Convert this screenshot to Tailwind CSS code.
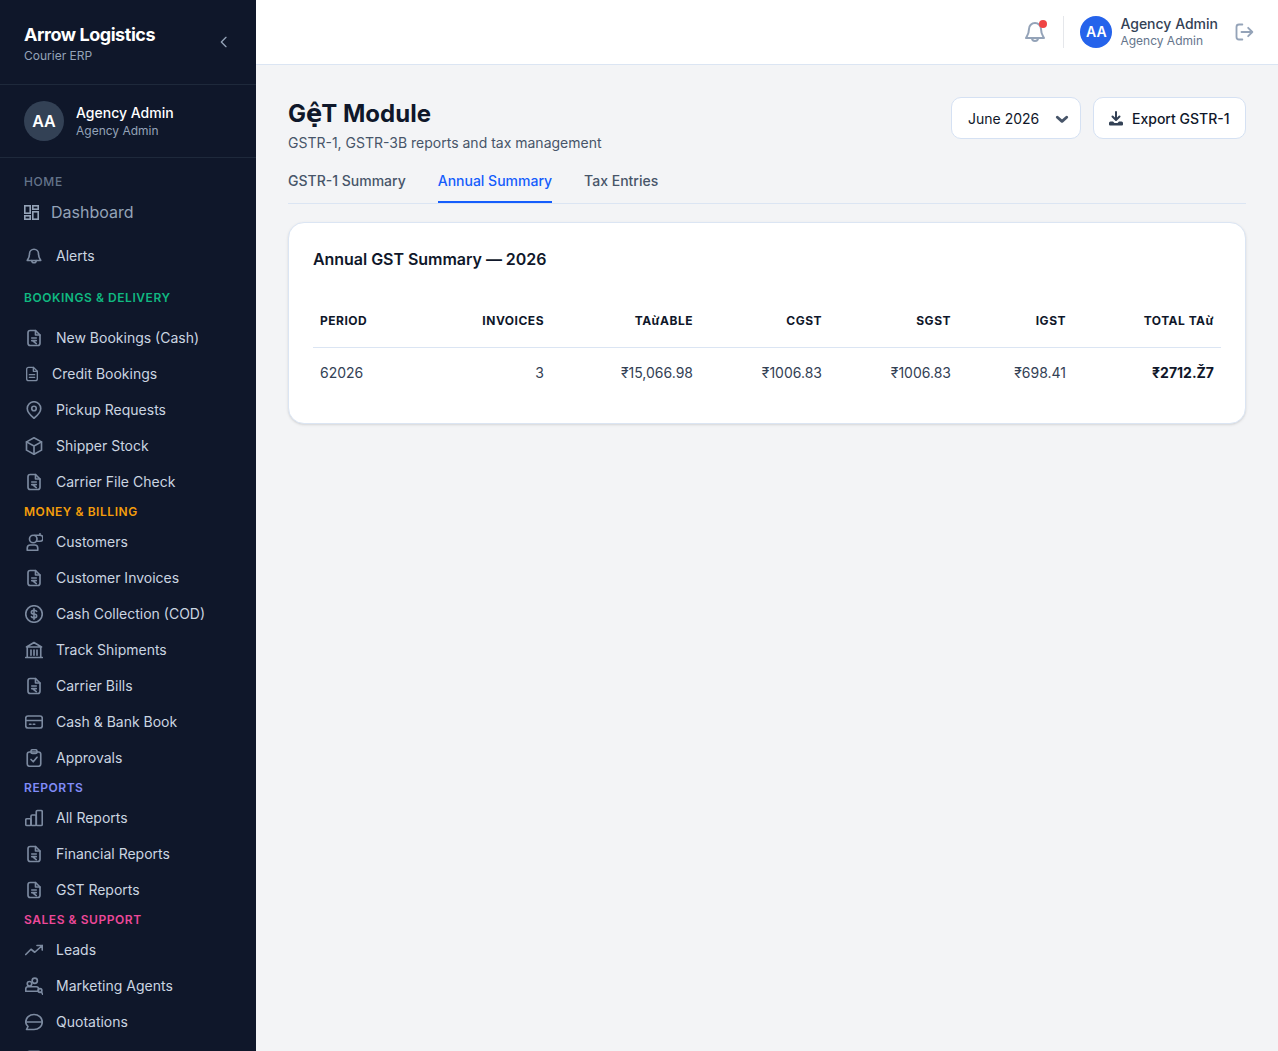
<!DOCTYPE html>
<html>
<head>
    <title>GST Module</title>
    <script src="https://cdn.jsdelivr.net/npm/@tailwindcss/browser@4"></script>
</head>
<body class="h-screen w-full overflow-hidden flex bg-[#f3f4f6] font-['Inter',sans-serif] text-[#0f172a] antialiased">
    <aside class="w-64 h-[1051px] shrink-0 overflow-hidden bg-[#0f172a] text-[#cbd5e1]">
        <div class="h-[85px] border-b border-[#1e293b] pl-6 pr-6 flex justify-between">
            <div class="pt-[21px]">
                <div class="text-lg leading-[28px] font-bold tracking-[-0.45px] text-white">Arrow Logistics</div>
                <div class="-mt-px text-xs leading-4 text-[#94a3b8]">Courier ERP</div>
            </div>
            <svg class="w-4 h-4 text-[#94a3b8] mt-[34px]" viewBox="0 0 24 24" fill="none" stroke="currentColor" stroke-width="2" stroke-linecap="round" stroke-linejoin="round"><path d="M15 5l-7 7 7 7"/></svg>
        </div>
        <div class="h-[73px] border-b border-[#1e293b] px-6 flex items-center gap-3">
            <div class="w-10 h-10 rounded-full bg-[#334155] flex items-center justify-center text-white font-semibold">AA</div>
            <div>
                <div class="text-sm leading-5 font-medium text-white">Agency Admin</div>
                <div class="text-xs leading-4 text-[#94a3b8]">Agency Admin</div>
            </div>
        </div>

        <div class="h-9 pl-6 pt-4 text-xs leading-4 font-medium tracking-[0.6px] text-[#64748b]">HOME</div>
        <div class="h-9 pl-6 flex items-center gap-3 text-[#94a3b8] text-base">
            <svg class="w-[15px] h-[15px]" viewBox="0 0 15 15" fill="none" stroke="currentColor" stroke-width="1.6"><rect x="0.8" y="0.8" width="5.4" height="7.4"/><rect x="8.800" y="0.8" width="5.4" height="3.4"/><rect x="8.800" y="6.8" width="5.4" height="7.4"/><rect x="0.8" y="10.8" width="5.4" height="3.4"/></svg>
            <span>Dashboard</span>
        </div>
        <a class="h-9 mt-[8px] pl-[25px] flex items-center gap-[13px] text-sm">
            <svg class="w-[18px] h-[18px] text-[#7c8aa0]" viewBox="0 0 24 24" fill="none" stroke="currentColor" stroke-width="2.2" stroke-linecap="round" stroke-linejoin="round"><path d="M18 9a6 6 0 0 0-12 0c0 5-2 7-3 9h18c-1-2-3-4-3-9"/><path d="M9 18a3 3 0 0 0 6 0"/></svg>
            <span>Alerts</span>
        </a>

        <div class="h-6 mt-3 mb-[10px] pl-6 flex items-center text-xs font-semibold tracking-[0.55px] text-[#10b981]">BOOKINGS &amp; DELIVERY</div>
        <a class="h-9 pl-[25px] flex items-center gap-[13px] text-sm">
            <svg class="w-[18px] h-[18px] text-[#7c8aa0]" viewBox="0 0 24 24" fill="none" stroke="currentColor" stroke-width="2.2" stroke-linecap="round" stroke-linejoin="round"><path d="M14 2H7a3 3 0 0 0-3 3v14a3 3 0 0 0 3 3h10a3 3 0 0 0 3-3V8z"/><path d="M14 2v6h6"/><path d="M9 12h6M9 15.500h6M10 15.500l5 4"/></svg>
            <span>New Bookings (Cash)</span>
        </a>
        <a class="h-9 pl-[26px] flex items-center gap-[14px] text-sm">
            <svg class="w-3 h-4 text-[#7c8aa0]" viewBox="0 0 18 24" fill="none" stroke="currentColor" stroke-width="2" stroke-linecap="round" stroke-linejoin="round"><path d="M11 2H4a3 3 0 0 0-3 3v14a3 3 0 0 0 3 3h10a3 3 0 0 0 3-3V8z"/><path d="M11 2v6h6"/><path d="M5 13h8M5 17h8"/></svg>
            <span>Credit Bookings</span>
        </a>
        <a class="h-9 pl-[25px] flex items-center gap-[13px] text-sm">
            <svg class="w-[18px] h-[18px] text-[#7c8aa0]" viewBox="0 0 24 24" fill="none" stroke="currentColor" stroke-width="2.2" stroke-linecap="round" stroke-linejoin="round"><path d="M12 23c-5-4-9-8-9-13a9 9 0 0 1 18 0c0 5-4 9-9 13z"/><circle cx="12" cy="10" r="3"/></svg>
            <span>Pickup Requests</span>
        </a>
        <a class="h-9 pl-[25px] flex items-center gap-[13px] text-sm">
            <svg class="w-[18px] h-[18px] text-[#7c8aa0]" viewBox="0 0 24 24" fill="none" stroke="currentColor" stroke-width="2.2" stroke-linecap="round" stroke-linejoin="round"><path d="M12 1l10 5.500v11L12 23 2 17.500v-11z"/><path d="M2 6.500l10 5.500 10-5.500M12 12v11"/></svg>
            <span>Shipper Stock</span>
        </a>
        <a class="h-9 pl-[25px] flex items-center gap-[13px] text-sm">
            <svg class="w-[18px] h-[18px] text-[#7c8aa0]" viewBox="0 0 24 24" fill="none" stroke="currentColor" stroke-width="2.2" stroke-linecap="round" stroke-linejoin="round"><path d="M14 2H7a3 3 0 0 0-3 3v14a3 3 0 0 0 3 3h10a3 3 0 0 0 3-3V8z"/><path d="M14 2v6h6"/><path d="M9 12h6M9 15.500h6M10 15.500l5 4"/></svg>
            <span>Carrier File Check</span>
        </a>

        <div class="h-6 pl-6 flex items-center text-xs font-semibold tracking-[0.55px] text-[#f59e0b]">MONEY &amp; BILLING</div>
        <a class="h-9 pl-[25px] flex items-center gap-[13px] text-sm">
            <svg class="w-[18px] h-[18px] text-[#7c8aa0]" viewBox="0 0 24 24" fill="none" stroke="currentColor" stroke-width="2.2" stroke-linecap="round" stroke-linejoin="round"><circle cx="11" cy="8" r="5"/><path d="M3 23v-3a4 4 0 0 1 4-4h6a4 4 0 0 1 4 4v3z"/><path d="M13 3h7a2.500 2.500 0 0 1 0 8h-5M20 1v2"/></svg>
            <span>Customers</span>
        </a>
        <a class="h-9 pl-[25px] flex items-center gap-[13px] text-sm">
            <svg class="w-[18px] h-[18px] text-[#7c8aa0]" viewBox="0 0 24 24" fill="none" stroke="currentColor" stroke-width="2.2" stroke-linecap="round" stroke-linejoin="round"><path d="M14 2H7a3 3 0 0 0-3 3v14a3 3 0 0 0 3 3h10a3 3 0 0 0 3-3V8z"/><path d="M14 2v6h6"/><path d="M9 12h6M9 15.500h6M10 15.500l5 4"/></svg>
            <span>Customer Invoices</span>
        </a>
        <a class="h-9 pl-[25px] flex items-center gap-[13px] text-sm">
            <svg class="w-[18px] h-[18px] text-[#7c8aa0]" viewBox="0 0 24 24" fill="none" stroke="currentColor" stroke-width="2.2" stroke-linecap="round" stroke-linejoin="round"><circle cx="12" cy="12" r="11"/><path d="M15.500 8.500C15 7.500 14 7 12 7c-2 0-3.500 1-3.500 2.500S10 12 12 12s3.500 1 3.500 2.500S14 17 12 17c-2 0-3-.5-3.500-1.500M12 5v14"/></svg>
            <span>Cash Collection (COD)</span>
        </a>
        <a class="h-9 pl-[25px] flex items-center gap-[13px] text-sm">
            <svg class="w-[18px] h-[18px] text-[#7c8aa0]" viewBox="0 0 24 24" fill="none" stroke="currentColor" stroke-width="2.2" stroke-linecap="round" stroke-linejoin="round"><path d="M1 22h22M2 8l10-6 10 6zM3 8v14M21 8v14M8 12v7M12 12v7M16 12v7"/></svg>
            <span>Track Shipments</span>
        </a>
        <a class="h-9 pl-[25px] flex items-center gap-[13px] text-sm">
            <svg class="w-[18px] h-[18px] text-[#7c8aa0]" viewBox="0 0 24 24" fill="none" stroke="currentColor" stroke-width="2.2" stroke-linecap="round" stroke-linejoin="round"><path d="M14 2H7a3 3 0 0 0-3 3v14a3 3 0 0 0 3 3h10a3 3 0 0 0 3-3V8z"/><path d="M14 2v6h6"/><path d="M9 12h6M9 15.500h6M10 15.500l5 4"/></svg>
            <span>Carrier Bills</span>
        </a>
        <a class="h-9 pl-[25px] flex items-center gap-[13px] text-sm">
            <svg class="w-[18px] h-[18px] text-[#7c8aa0]" viewBox="0 0 24 24" fill="none" stroke="currentColor" stroke-width="2.2" stroke-linecap="round" stroke-linejoin="round"><rect x="1" y="4" width="22" height="16" rx="3"/><path d="M1 10h22M6 15h2M11 15h2"/></svg>
            <span>Cash &amp; Bank Book</span>
        </a>
        <a class="h-9 pl-[25px] flex items-center gap-[13px] text-sm">
            <svg class="w-[18px] h-[18px] text-[#7c8aa0]" viewBox="0 0 24 24" fill="none" stroke="currentColor" stroke-width="2.2" stroke-linecap="round" stroke-linejoin="round"><rect x="3" y="4" width="18" height="19" rx="3"/><rect x="8" y="1" width="8" height="5" rx="2"/><path d="M8 14l3 3 5-6"/></svg>
            <span>Approvals</span>
        </a>

        <div class="h-6 pl-6 flex items-center text-xs font-semibold tracking-[0.55px] text-[#818cf8]">REPORTS</div>
        <a class="h-9 pl-[25px] flex items-center gap-[13px] text-sm">
            <svg class="w-[18px] h-[18px] text-[#7c8aa0]" viewBox="0 0 24 24" fill="none" stroke="currentColor" stroke-width="2.2" stroke-linecap="round" stroke-linejoin="round"><rect x="1" y="13" width="7" height="9" rx="1.500"/><rect x="8" y="8" width="7" height="14" rx="1.500"/><rect x="15" y="2" width="8" height="20" rx="1.500"/></svg>
            <span>All Reports</span>
        </a>
        <a class="h-9 pl-[25px] flex items-center gap-[13px] text-sm">
            <svg class="w-[18px] h-[18px] text-[#7c8aa0]" viewBox="0 0 24 24" fill="none" stroke="currentColor" stroke-width="2.2" stroke-linecap="round" stroke-linejoin="round"><path d="M14 2H7a3 3 0 0 0-3 3v14a3 3 0 0 0 3 3h10a3 3 0 0 0 3-3V8z"/><path d="M14 2v6h6"/><path d="M9 12h6M9 15.500h6M10 15.500l5 4"/></svg>
            <span>Financial Reports</span>
        </a>
        <a class="h-9 pl-[25px] flex items-center gap-[13px] text-sm">
            <svg class="w-[18px] h-[18px] text-[#7c8aa0]" viewBox="0 0 24 24" fill="none" stroke="currentColor" stroke-width="2.2" stroke-linecap="round" stroke-linejoin="round"><path d="M14 2H7a3 3 0 0 0-3 3v14a3 3 0 0 0 3 3h10a3 3 0 0 0 3-3V8z"/><path d="M14 2v6h6"/><path d="M9 12h6M9 15.500h6M10 15.500l5 4"/></svg>
            <span>GST Reports</span>
        </a>

        <div class="h-6 pl-6 flex items-center text-xs font-semibold tracking-[0.55px] text-[#ec4899]">SALES &amp; SUPPORT</div>
        <a class="h-9 pl-[25px] flex items-center gap-[13px] text-sm">
            <svg class="w-[18px] h-[18px] text-[#7c8aa0]" viewBox="0 0 24 24" fill="none" stroke="currentColor" stroke-width="2.2" stroke-linecap="round" stroke-linejoin="round"><path d="M1 18l7-7 5 4 10-9M16 6h7v6"/></svg>
            <span>Leads</span>
        </a>
        <a class="h-9 pl-[25px] flex items-center gap-[13px] text-sm">
            <svg class="w-[18px] h-[18px] text-[#7c8aa0]" viewBox="0 0 24 24" fill="none" stroke="currentColor" stroke-width="2.2" stroke-linecap="round" stroke-linejoin="round"><circle cx="13" cy="5" r="3.500"/><circle cx="6" cy="9" r="3"/><path d="M1 19v-3a3 3 0 0 1 3-3h11a3 3 0 0 1 3 3v3z"/><circle cx="20" cy="18" r="2.500"/><path d="M22 20l1.500 3"/></svg>
            <span>Marketing Agents</span>
        </a>
        <a class="h-9 pl-[25px] flex items-center gap-[13px] text-sm">
            <svg class="w-[18px] h-[18px] text-[#7c8aa0]" viewBox="0 0 24 24" fill="none" stroke="currentColor" stroke-width="2.2" stroke-linecap="round" stroke-linejoin="round"><path d="M12 2c6 0 11 4 11 10s-5 10-11 10H2l2-4c-2-2-3-4-3-6C1 6 6 2 12 2z"/><path d="M2 12h21"/></svg>
            <span>Quotations</span>
        </a>
        <a class="h-9 pl-[25px] flex items-center gap-[13px] text-sm">
            <svg class="w-[18px] h-[18px] text-[#7c8aa0]" viewBox="0 0 24 24" fill="none" stroke="currentColor" stroke-width="2.2"><rect x="3" y="3" width="18" height="18" rx="3"/></svg>
        </a>
    </aside>

    <div class="flex-1 min-w-0">
        <header class="h-[65px] bg-white border-b border-[#dbe5f3] pr-6 flex items-center justify-end">
            <div class="relative mr-4">
                <svg class="w-6 h-6 text-[#94a3b8]" viewBox="0 0 24 24" fill="none" stroke="currentColor" stroke-width="2" stroke-linecap="round" stroke-linejoin="round"><path d="M18 9a6 6 0 0 0-12 0c0 5-2 7-3 9h18c-1-2-3-4-3-9"/><path d="M9 18a3 3 0 0 0 6 0"/></svg>
                <span class="absolute top-0 right-0 w-2 h-2 rounded-full bg-[#ef4444]"></span>
            </div>
            <div class="w-px h-8 bg-[#e5e7eb] mr-4"></div>
            <div class="w-8 h-8 rounded-full bg-[#2563eb] flex items-center justify-center text-white text-sm font-semibold">AA</div>
            <div class="ml-2 mb-[2px]">
                <div class="text-sm leading-5 font-medium text-[#334155]">Agency Admin</div>
                <div class="-mt-px text-xs leading-4 text-[#64748b]">Agency Admin</div>
            </div>
            <svg class="w-5 h-5 ml-4 text-[#94a3b8]" viewBox="0 0 24 24" fill="none" stroke="currentColor" stroke-width="2.2" stroke-linecap="round" stroke-linejoin="round"><path d="M10 3H6a3 3 0 0 0-3 3v12a3 3 0 0 0 3 3h4"/><path d="M9 12h13M17 7l5 5-5 5"/></svg>
        </header>

        <main class="px-8 pt-8">
            <div class="flex justify-between items-start">
                <div>
                    <h1 class="mt-px text-2xl leading-8 font-bold">G<span class="font-['DejaVu_Sans'] tracking-[-1px]">ệ</span>T Module</h1>
                    <p class="mt-[3px] text-sm leading-5 text-[#475569]">GSTR-1, GSTR-3B reports and tax management</p>
                </div>
                <div class="flex gap-3">
                    <button class="w-[130px] h-[42px] pt-px bg-white border border-[#d5e1f3] rounded-[10px] pl-4 pr-[11px] flex items-center justify-between text-sm">
                        <span>June 2026</span>
                        <svg class="w-[14px] h-[14px] text-[#475569]" viewBox="0 0 24 24" fill="none" stroke="currentColor" stroke-width="5" stroke-linecap="round" stroke-linejoin="round"><path d="M4 9l8 7 8-7"/></svg>
                    </button>
                    <button class="w-[153px] h-[42px] pt-px bg-white border border-[#d5e1f3] rounded-[10px] pl-[14px] flex items-center gap-2 text-sm font-medium">
                        <svg class="w-[16px] h-[16px] text-[#334155]" viewBox="0 0 16 16" fill="none"><path d="M8 1v7.500M4.500 5.500L8 9l3.500-3.500" stroke="currentColor" stroke-width="2" stroke-linecap="round" stroke-linejoin="round"/><path d="M1 12a1.500 1.500 0 0 1 1.500-1.500H5l1.500 1.500h3L11 10.500h2.500A1.500 1.500 0 0 1 15 12v1.500a1 1 0 0 1-1 1H2a1 1 0 0 1-1-1z" fill="currentColor"/></svg>
                        <span>Export GSTR-1</span>
                    </button>
                </div>
            </div>

            <nav class="mt-2 h-[43px] border-b border-[#dbe5f3] flex gap-8 text-sm font-medium">
                <a class="h-[42px] flex items-center border-b-2 border-transparent text-[#475569]">GSTR-1 Summary</a>
                <a class="h-[42px] flex items-center border-b-2 border-[#155dfc] text-[#155dfc]">Annual Summary</a>
                <a class="h-[42px] flex items-center border-b-2 border-transparent text-[#475569]">Tax Entries</a>
            </nav>

            <section class="mt-[18px] h-[202px] bg-white border border-[#dbe5f3] rounded-2xl shadow-sm px-6 pt-6">
                <h2 class="text-base leading-6 font-semibold tracking-[-0.04px]">Annual GST Summary — 2026</h2>
                <table class="mt-6 w-[908px] table-fixed text-sm">
                    <thead>
                        <tr class="h-[52px] border-b border-[#dbe5f3] text-xs font-semibold tracking-[0.5px]">
                            <th class="w-[119px] px-[7px] text-left">PERIOD</th>
                            <th class="w-[119px] px-[7px] text-right">INVOICES</th>
                            <th class="w-[149px] px-[7px] text-right">TAừABLE</th>
                            <th class="w-[129px] px-[7px] text-right">CGST</th>
                            <th class="w-[129px] px-[7px] text-right">SGST</th>
                            <th class="w-[115px] px-[7px] text-right">IGST</th>
                            <th class="w-[148px] px-[7px] text-right">TOTAL TAừ</th>
                        </tr>
                    </thead>
                    <tbody>
                        <tr class="h-[52px] text-[#334155]">
                            <td class="px-[7px]">62026</td>
                            <td class="px-[7px] text-right">3</td>
                            <td class="px-[7px] text-right">₹15,066.98</td>
                            <td class="px-[7px] text-right">₹1006.83</td>
                            <td class="px-[7px] text-right">₹1006.83</td>
                            <td class="px-[7px] text-right">₹698.41</td>
                            <td class="px-[7px] text-right font-bold text-[#0f172a]">₹2712.Ž7</td>
                        </tr>
                    </tbody>
                </table>
            </section>
        </main>
    </div>
</body>
</html>
